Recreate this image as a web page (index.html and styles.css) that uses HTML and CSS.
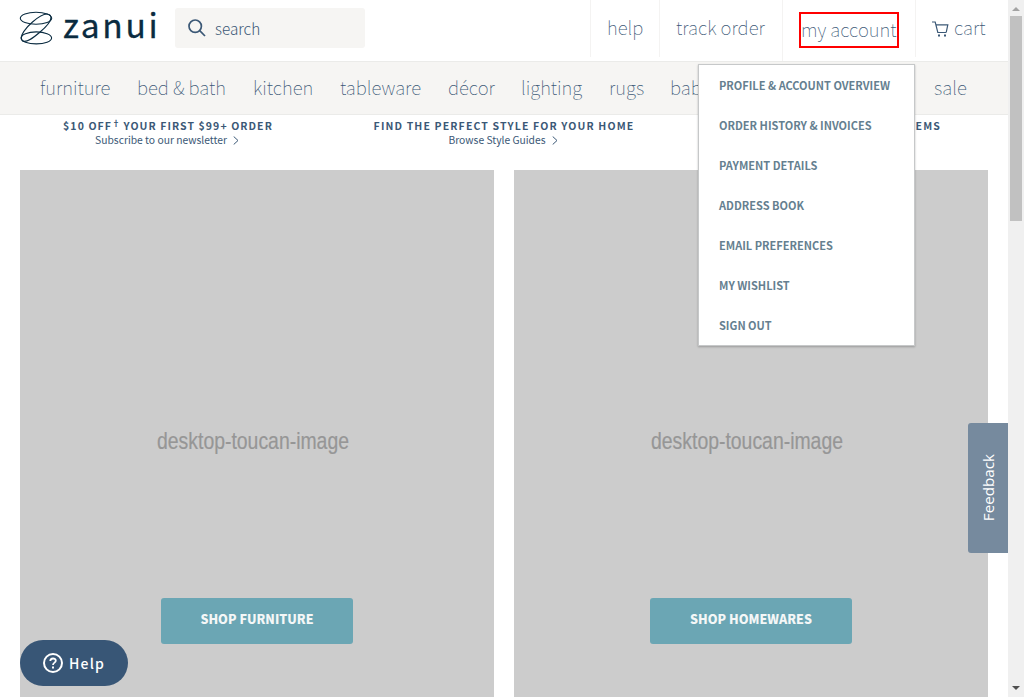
FILE: index.html
```html
<!DOCTYPE html>
<html lang="en">
<head>
<meta charset="utf-8">
<title>zanui</title>
<link rel="stylesheet" href="styles.css">
</head>
<body>
<div class="page">
  <header class="top">
    <a class="logo">
      <svg class="mark" width="34" height="34" viewBox="0 0 34 34" fill="none" stroke="#0a2b40" stroke-width="1.1"><ellipse cx="17" cy="7.300" rx="15.700" ry="6"/><ellipse cx="17.300" cy="26.900" rx="15.300" ry="6"/><path d="M3.200 29.500C0 25 7 16.500 13.500 11C20 5.500 28 1 31.300 4.500C34 8.500 27 16 20.500 21.500C14 27 6.500 33 3.200 29.500Z"/></svg>
      <span class="word">zanui</span>
    </a>
    <div class="search">
      <svg width="18" height="18" viewBox="0 0 18 18" fill="none" stroke="#3b5876" stroke-width="1.7"><circle cx="7.200" cy="7.200" r="6.200"/><path d="M11.700 11.700L17 17"/></svg>
      <span class="t t-search">search</span>
    </div>
    <nav class="links">
      <a class="link help"><span class="t">help</span></a>
      <a class="link track"><span class="t">track order</span></a>
      <a class="link account"><span class="outline"><span class="t">my account</span></span></a>
      <a class="link cart"><svg width="17" height="16" viewBox="0 0 17 16" fill="none" stroke="#3b5876" stroke-width="1.200"><path d="M0 1H3.200L5.800 11.500H14.200M3.900 3.800H15.800L14.200 11.500"/><path d="M6 14.500H8M12 14.500H14" stroke-width="2"/></svg><span class="t">cart</span></a>
    </nav>
    <div class="menu">
      <a>Profile &amp; Account Overview</a>
      <a>Order History &amp; Invoices</a>
      <a>Payment Details</a>
      <a>Address Book</a>
      <a>Email Preferences</a>
      <a>My Wishlist</a>
      <a>Sign Out</a>
    </div>
  </header>
  <nav class="cats">
    <a class="c1">furniture</a><a class="c2">bed &amp; bath</a><a class="c3">kitchen</a><a class="c4">tableware</a><a class="c5">décor</a><a class="c6">lighting</a><a class="c7">rugs</a><a class="c8">bab</a><a class="c9">sale</a>
  </nav>
  <section class="promos">
    <div class="promo"><b class="offer">$10 OFF<sup>†</sup> YOUR FIRST $99+ ORDER</b><span class="sub"><span class="s1">Subscribe to our newsletter</span><svg width="6" height="9" viewBox="0 0 6 9" fill="none" stroke="#3b5876"><path d="M.7.5L5 4.500L.7 8.500"/></svg></span></div>
    <div class="promo"><b class="find">FIND THE PERFECT STYLE FOR YOUR HOME</b><span class="sub"><span class="s2">Browse Style Guides</span><svg width="6" height="9" viewBox="0 0 6 9" fill="none" stroke="#3b5876"><path d="M.7.5L5 4.500L.7 8.500"/></svg></span></div>
    <div class="promo last"><b>EMS</b></div>
  </section>
  <main class="tiles">
    <article class="tile">
      <svg class="caption" width="194" height="32"><text x="1" y="22" textLength="192" lengthAdjust="spacingAndGlyphs">desktop-toucan-image</text></svg>
      <a class="btn furn">SHOP FURNITURE</a>
    </article>
    <article class="tile">
      <svg class="caption" width="194" height="32"><text x="1" y="22" textLength="192" lengthAdjust="spacingAndGlyphs">desktop-toucan-image</text></svg>
      <a class="btn home">SHOP HOMEWARES</a>
    </article>
  </main>
  <a class="feedback"><span>Feedback</span></a>
  <a class="support"><svg width="20" height="20" viewBox="0 0 20 20" fill="none" stroke="#fff" stroke-width="2"><circle cx="10" cy="10" r="9"/><path d="M7.300 8C7.300 4.700 12.800 4.700 12.800 7.800C12.800 9.700 10 9.600 10 12" stroke-width="1.800"/><path d="M10 13.600V15.400"/></svg><span>Help</span></a>
</div>
<aside class="scrollbar">
  <i class="up"></i><i class="thumb"></i><i class="down"></i>
</aside>
</body>
</html>
```
FILE: styles.css
```css
* { box-sizing: border-box; }
body {
  margin: 0;
  display: flex;
  width: 1024px;
  height: 697px;
  overflow: hidden;
  background: #fff;
  color: #3b5876;
  font-family: "Noto Sans CJK SC", "Open Sans", sans-serif;
}
.page { position: relative; width: 1008px; height: 697px; overflow: hidden; }
.top { position: relative; display: flex; height: 61px; }
.logo { display: flex; width: 175px; padding: 11px 0 0 19px; color: #0a2b40; }
.word { margin-left: 10px; margin-top: -7px; font-size: 33.500px; line-height: 40px; letter-spacing: 2.700px; font-weight: 400; -webkit-text-stroke: .3px #0a2b40; }
.search { display: flex; align-items: center; gap: 9px; width: 190px; height: 40px; margin-top: 8px; padding-left: 13px; background: #f6f5f3; border-radius: 3px; }
.search svg { margin-top: -1px; }
.t { font-weight: 100; font-size: 18.600px; line-height: 24px; white-space: nowrap; }
.t-search { font-size: 15.300px; font-weight: 300; margin-top: -1px; }
.links { display: flex; margin-left: auto; }
.link { display: flex; height: 57px; padding: 15px 0 0 16px; border-left: 1px solid #f4f3f2; }
.help { width: 69px; }
.track { width: 123px; }
.account { width: 133px; height: 61px; padding-top: 12px; }
.cart { width: 93px; }
.cart svg { margin: 6px 5px 0 0; }
.outline { width: 100px; height: 36px; padding: 3px 0 0; border: 2px solid #f00; }
.menu { position: absolute; z-index: 3; left: 698px; top: 64px; width: 217px; height: 282px; padding-left: 20px; border: 1px solid #c6c8c9; background: #fff; box-shadow: 0 1px 2px rgba(0,0,0,.25); }
.menu a { display: block; height: 40px; line-height: 40px; font-size: 11px; font-weight: 700; color: #657f90; text-transform: uppercase; white-space: nowrap; }
.cats { display: flex; height: 54px; padding-left: 40px; border: solid #ebebe9; border-width: 1px 0; background: #f6f5f3; font-size: 18.600px; font-weight: 100; line-height: 50px; white-space: nowrap; }
.c1 { width: 97px; } .c2 { width: 116px; } .c3 { width: 87px; } .c4 { width: 108px; }
.c5 { width: 73px; } .c6 { width: 88px; } .c7 { width: 61px; } .c8 { width: 264px; }
.promos { display: flex; height: 55px; }
.promo { width: 336px; padding-top: 4px; text-align: center; }
.promo b { display: block; font-size: 10.500px; line-height: 14px; letter-spacing: 1.140px; white-space: nowrap; }
.promo .offer { letter-spacing: 1.080px; }
.promo sup { font-size: 8px; line-height: 0; letter-spacing: 0; }
.sub { display: flex; justify-content: center; align-items: center; gap: 6px; padding-right: 2px; font-size: 10.300px; line-height: 14px; }
.last b { text-align: right; padding-right: 67px; }
.tiles { display: flex; gap: 20px; padding-left: 20px; }
.tile { display: flex; flex-direction: column; align-items: center; width: 474px; height: 527px; background: #ccc; }
.caption { margin-top: 257px; margin-right: 8px; overflow: visible; }
.caption text { font-family: "Liberation Sans", sans-serif; font-size: 24px; fill: #969696; stroke: #969696; stroke-width: .2px; }
.btn { height: 46px; margin-top: 139px; border-radius: 3px; background: #6ba6b4; color: #f4f7f7; font-size: 12.500px; line-height: 42px; font-weight: 900; text-align: center; }
.furn { width: 192px; }
.home { width: 202px; }
.feedback { position: absolute; right: 0; top: 423px; width: 40px; height: 130px; border-radius: 3px 0 0 3px; background: #768a9e; color: #fff; display: flex; align-items: center; justify-content: center; }
.feedback span { writing-mode: vertical-rl; transform: rotate(180deg); font-size: 15.200px; line-height: 20px; font-family: "Open Sans", sans-serif; }
.support { position: absolute; left: 20px; top: 640px; width: 108px; height: 46px; padding-left: 23px; border-radius: 23px; background: #385676; color: #fff; display: flex; align-items: center; gap: 6px; font-size: 14px; font-weight: 500; letter-spacing: 1.200px; }
.scrollbar { display: flex; flex-direction: column; align-items: center; width: 16px; height: 697px; background: #f0f0f0; }
.up { width: 0; height: 0; margin-top: 7px; border: 4px solid transparent; border-top: 0; border-bottom-color: #a3a3a3; }
.thumb { width: 12px; height: 205px; margin-top: 5px; background: #c1c1c1; }
.down { width: 0; height: 0; margin-top: 465px; border: 4px solid transparent; border-bottom: 0; border-top-color: #505050; }
```
